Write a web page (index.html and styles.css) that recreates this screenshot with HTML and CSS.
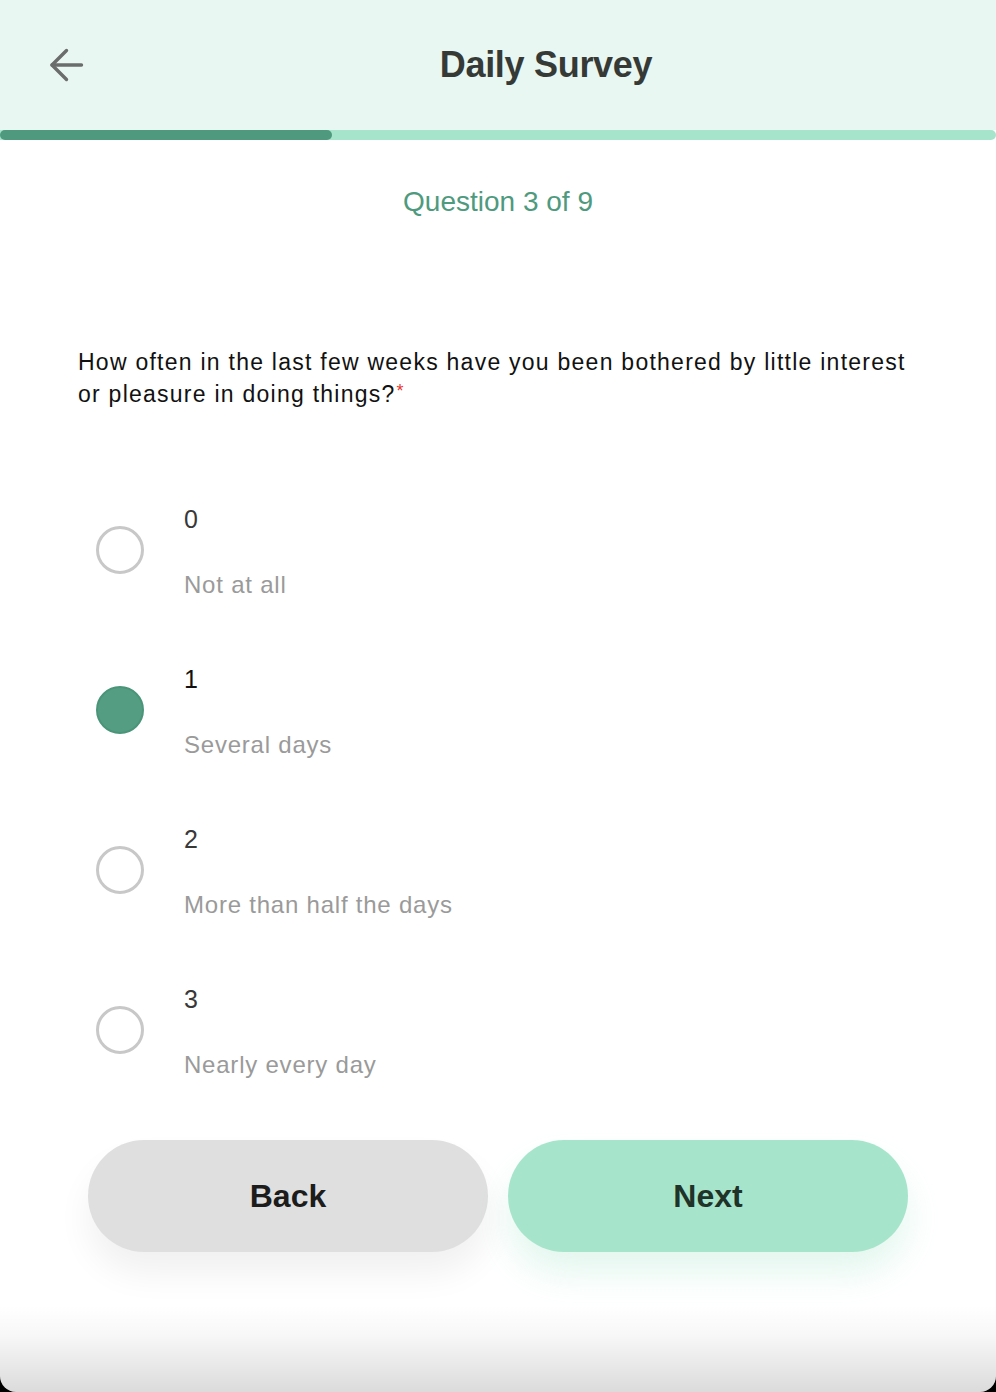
FILE: index.html
```html
<!DOCTYPE html>
<html lang="en">
<head>
<meta charset="utf-8">
<title>Daily Survey</title>
<link rel="stylesheet" href="styles.css">
</head>
<body>
<div class="app">
  <header class="topbar">
    <button class="back-btn" aria-label="Go back">
      <svg width="36" height="36" viewBox="0 0 36 36" fill="none" stroke="#6b6d6c" stroke-width="3.4" stroke-linecap="round" stroke-linejoin="round">
        <path d="M33.5 18 H4"/>
        <path d="M18.5 3.5 L4 18 L18.5 32.5"/>
      </svg>
    </button>
    <h1 class="title">Daily Survey</h1>
  </header>
  <div class="progress"><div class="progress-fill" style="width:33.3%"></div></div>

  <main class="survey">
    <p class="counter">Question 3 of 9</p>
    <p class="question">How often in the last few weeks have you been bothered by little interest or pleasure in doing things?<span class="req">*</span></p>

    <div class="options">
      <div class="option">
        <span class="radio"></span>
        <div class="option-text">
          <span class="option-value">0</span>
          <span class="option-label">Not at all</span>
        </div>
      </div>
      <div class="option is-checked">
        <span class="radio"></span>
        <div class="option-text">
          <span class="option-value">1</span>
          <span class="option-label">Several days</span>
        </div>
      </div>
      <div class="option">
        <span class="radio"></span>
        <div class="option-text">
          <span class="option-value">2</span>
          <span class="option-label">More than half the days</span>
        </div>
      </div>
      <div class="option">
        <span class="radio"></span>
        <div class="option-text">
          <span class="option-value">3</span>
          <span class="option-label">Nearly every day</span>
        </div>
      </div>
    </div>

    <div class="actions">
      <button class="btn btn-back">Back</button>
      <button class="btn btn-next">Next</button>
    </div>
  </main>
  <div class="footer-fade"></div>
</div>
</body>
</html>
```

FILE: styles.css
```css
html, body {
  margin: 0;
  padding: 0;
  background: #000;
  height: 100%;
}

body {
  font-family: "Liberation Sans", Arial, Helvetica, sans-serif;
}

.app {
  min-height: 1392px;
  display: flex;
  flex-direction: column;
  background: #fff;
  border-radius: 0 0 16px 16px;
  overflow: hidden;
}

.topbar {
  height: 130px;
  background: #e8f7f2;
  display: flex;
  align-items: center;
}

.back-btn {
  width: 96px;
  height: 36px;
  padding: 0 0 0 48px;
  border: 0;
  background: none;
  box-sizing: border-box;
  flex: none;
  cursor: pointer;
}

.back-btn svg {
  display: block;
}

.title {
  flex: 1;
  margin: 0;
  text-align: center;
  font-size: 36px;
  line-height: 40px;
  font-weight: 700;
  letter-spacing: -0.3px;
  color: #363a37;
}

.progress {
  height: 10px;
  background: #a6e5cc;
  border-radius: 0 5px 5px 0;
}

.progress-fill {
  height: 100%;
  background: #4f9a7e;
  border-radius: 5px;
}

.survey {
  display: flex;
  flex-direction: column;
}

.counter {
  margin: 45px 0 0;
  text-align: center;
  font-size: 28px;
  line-height: 34px;
  color: #4e9a7e;
}

.question {
  margin: 127px 78px 0;
  font-size: 23px;
  line-height: 32px;
  letter-spacing: 1.25px;
  color: #111;
}

.req {
  color: #e53935;
  font-size: 18px;
  line-height: 1;
  vertical-align: 5px;
  letter-spacing: 0;
  margin-left: 1px;
}

.options {
  margin-top: 94px;
  display: flex;
  flex-direction: column;
  gap: 64px;
}

.option {
  display: flex;
  align-items: center;
  gap: 40px;
  padding-left: 96px;
}

.radio {
  width: 48px;
  height: 48px;
  border-radius: 50%;
  border: 3px solid #c8c8c8;
  box-sizing: border-box;
  margin-bottom: 4px;
  flex: none;
}

.option.is-checked .radio {
  border: 2px solid #4a957a;
  background: #549d82;
}

.option-text {
  display: flex;
  flex-direction: column;
  gap: 36px;
}

.option-value {
  font-size: 25px;
  line-height: 30px;
  color: #383838;
}

.option.is-checked .option-value {
  color: #111;
}

.option-label {
  font-size: 24px;
  line-height: 30px;
  letter-spacing: 0.78px;
  color: #9a9a9a;
}

.actions {
  margin-top: 60px;
  padding: 0 88px;
  display: grid;
  grid-template-columns: 1fr 1fr;
  gap: 20px;
}

.btn {
  height: 112px;
  border: 0;
  border-radius: 56px;
  font-family: "Liberation Sans", Arial, Helvetica, sans-serif;
  font-size: 32px;
  font-weight: 700;
  cursor: pointer;
}

.btn-back {
  background: #dfdfdf;
  color: #1c1c1c;
  box-shadow: 0 22px 34px rgba(0, 0, 0, 0.06);
}

.btn-next {
  background: #a6e5cc;
  color: #1f3328;
  box-shadow: 0 22px 34px rgba(120, 215, 175, 0.2);
}

.footer-fade {
  flex: 1;
  background: linear-gradient(to bottom, rgba(0, 0, 0, 0) 0, rgba(0, 0, 0, 0) 38%, rgba(0, 0, 0, 0.03) 60%, rgba(0, 0, 0, 0.14) 100%);
}
```
